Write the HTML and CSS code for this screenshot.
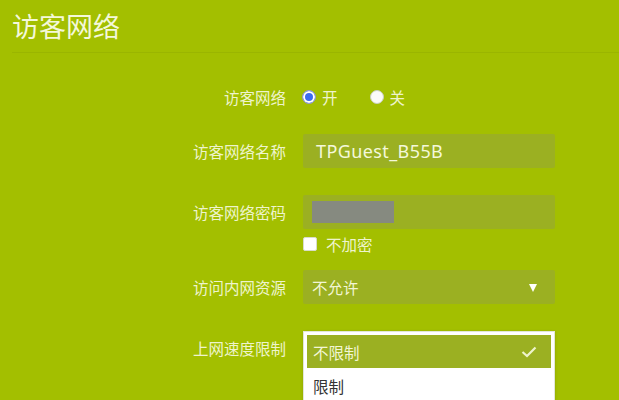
FILE: index.html
```html
<!DOCTYPE html>
<html lang="zh-CN">
<head>
<meta charset="utf-8">
<title>访客网络</title>
<link rel="stylesheet" href="styles.css">
</head>
<body>
<div class="page">
  <h1 class="title">访客网络</h1>
  <div class="divider"></div>

  <div class="row row-radio">
    <div class="label">访客网络</div>
    <div class="control radios">
      <span class="radio checked"></span><span class="opt">开</span>
      <span class="radio"></span><span class="opt">关</span>
    </div>
  </div>

  <div class="row row-name">
    <div class="label">访客网络名称</div>
    <div class="control field"><span class="field-text">TPGuest_B55B</span></div>
  </div>

  <div class="row row-pass">
    <div class="label">访客网络密码</div>
    <div class="control field"><span class="mask"></span></div>
  </div>

  <div class="row row-check">
    <div class="label"></div>
    <div class="control checks"><span class="checkbox"></span><span class="opt">不加密</span></div>
  </div>

  <div class="row row-select">
    <div class="label">访问内网资源</div>
    <div class="control field select"><span class="select-text">不允许</span><span class="caret"></span></div>
  </div>

  <div class="row row-menu">
    <div class="label menu-label">上网速度限制</div>
    <div class="control menu">
      <div class="menu-item selected"><span>不限制</span>
        <svg class="tick" width="16" height="12" viewBox="0 0 16 12"><polyline points="1.5,6 6,10 14.5,1.5" fill="none" stroke="#eef3cc" stroke-width="2.2"/></svg>
      </div>
      <div class="menu-item"><span>限制</span></div>
    </div>
  </div>
</div>
</body>
</html>
```
FILE: styles.css
```css
html, body {
  margin: 0;
  padding: 0;
}
body {
  background: #a3bf00;
  font-family: "Noto Sans CJK SC", "Noto Sans", sans-serif;
  color: #f2f6d4;
  width: 619px;
  height: 400px;
  overflow: hidden;
}
.page {
  padding-top: 10px;
}
.title {
  margin: 0;
  padding-left: 12px;
  font-size: 27px;
  font-weight: normal;
  line-height: 32px;
  color: #f4f8da;
}
.divider {
  margin: 10px 0 0 12px;
  height: 1px;
  background: #9ab500;
}
.row {
  display: flex;
  align-items: center;
}
.label {
  padding-right: 17px;
  box-sizing: border-box;
  width: 303px;
  text-align: right;
  font-size: 15.5px;
  line-height: 20px;
  color: #eef4cc;
}
.control {
  width: 252px;
  box-sizing: border-box;
}
.row-radio { margin-top: 29px; height: 30px; }
.radios {
  display: flex;
  align-items: center;
  margin-left: -1px;
}
.radio {
  width: 14px;
  height: 14px;
  border-radius: 50%;
  box-sizing: border-box;
  border: 1px solid #c9cfc0;
  background: #fbfbf8;
  display: inline-block;
}
.radio.checked {
  background: #3c6cf0;
  box-shadow: inset 0 0 0 2px #ffffff;
  border-color: #9aa0c8;
}
.opt {
  font-size: 15.5px;
  line-height: 20px;
  margin-left: 6px;
  margin-right: 32px;
  color: #eef4cc;
}
.field {
  height: 34px;
  background: #9bb022;
  border-radius: 2px;
  display: flex;
  align-items: center;
}
.row-name { margin-top: 22px; }
.field-text {
  font-family: "Noto Sans", "Open Sans", sans-serif;
  font-size: 18px;
  padding-left: 13px;
  color: #f4f8da;
  letter-spacing: 0.4px;
}
.row-pass { margin-top: 27px; }
.mask {
  display: block;
  margin-left: 9px;
  width: 82px;
  height: 22px;
  background: #868a80;
}
.row-check { margin-top: 4px; height: 22px; }
.checks {
  display: flex;
  align-items: center;
}
.checkbox {
  width: 14px;
  height: 14px;
  box-sizing: border-box;
  border-radius: 2px;
  background: #ffffff;
  border: 1px solid #d8dccc;
}
.checks .opt { margin-left: 9px; }
.row-select { margin-top: 15px; }
.select {
  justify-content: space-between;
  padding: 0 18px 0 9px;
}
.select-text {
  font-size: 15.5px;
  color: #f2f6d4;
}
.caret {
  width: 0;
  height: 0;
  border-left: 4.5px solid transparent;
  border-right: 4.5px solid transparent;
  border-top: 8px solid #ffffff;
  margin-top: 2px;
}
.row-menu {
  margin-top: 27px;
  align-items: flex-start;
}
.menu-label {
  padding-top: 7px;
}
.menu {
  background: #ffffff;
  border: 1px solid #e2e6d8;
  padding: 3px 3px 0 3px;
  width: 252px;
  box-shadow: 0 1px 3px rgba(0, 0, 0, 0.15);
}
.menu-item {
  height: 33px;
  display: flex;
  align-items: center;
  justify-content: space-between;
  padding: 0 14px 0 6px;
  font-size: 15.5px;
  color: #333333;
}
.menu-item.selected {
  background: #9bb022;
  color: #f2f6d4;
}
.menu-item:not(.selected) {
  height: 36px;
}
.tick {
  display: block;
}
```
